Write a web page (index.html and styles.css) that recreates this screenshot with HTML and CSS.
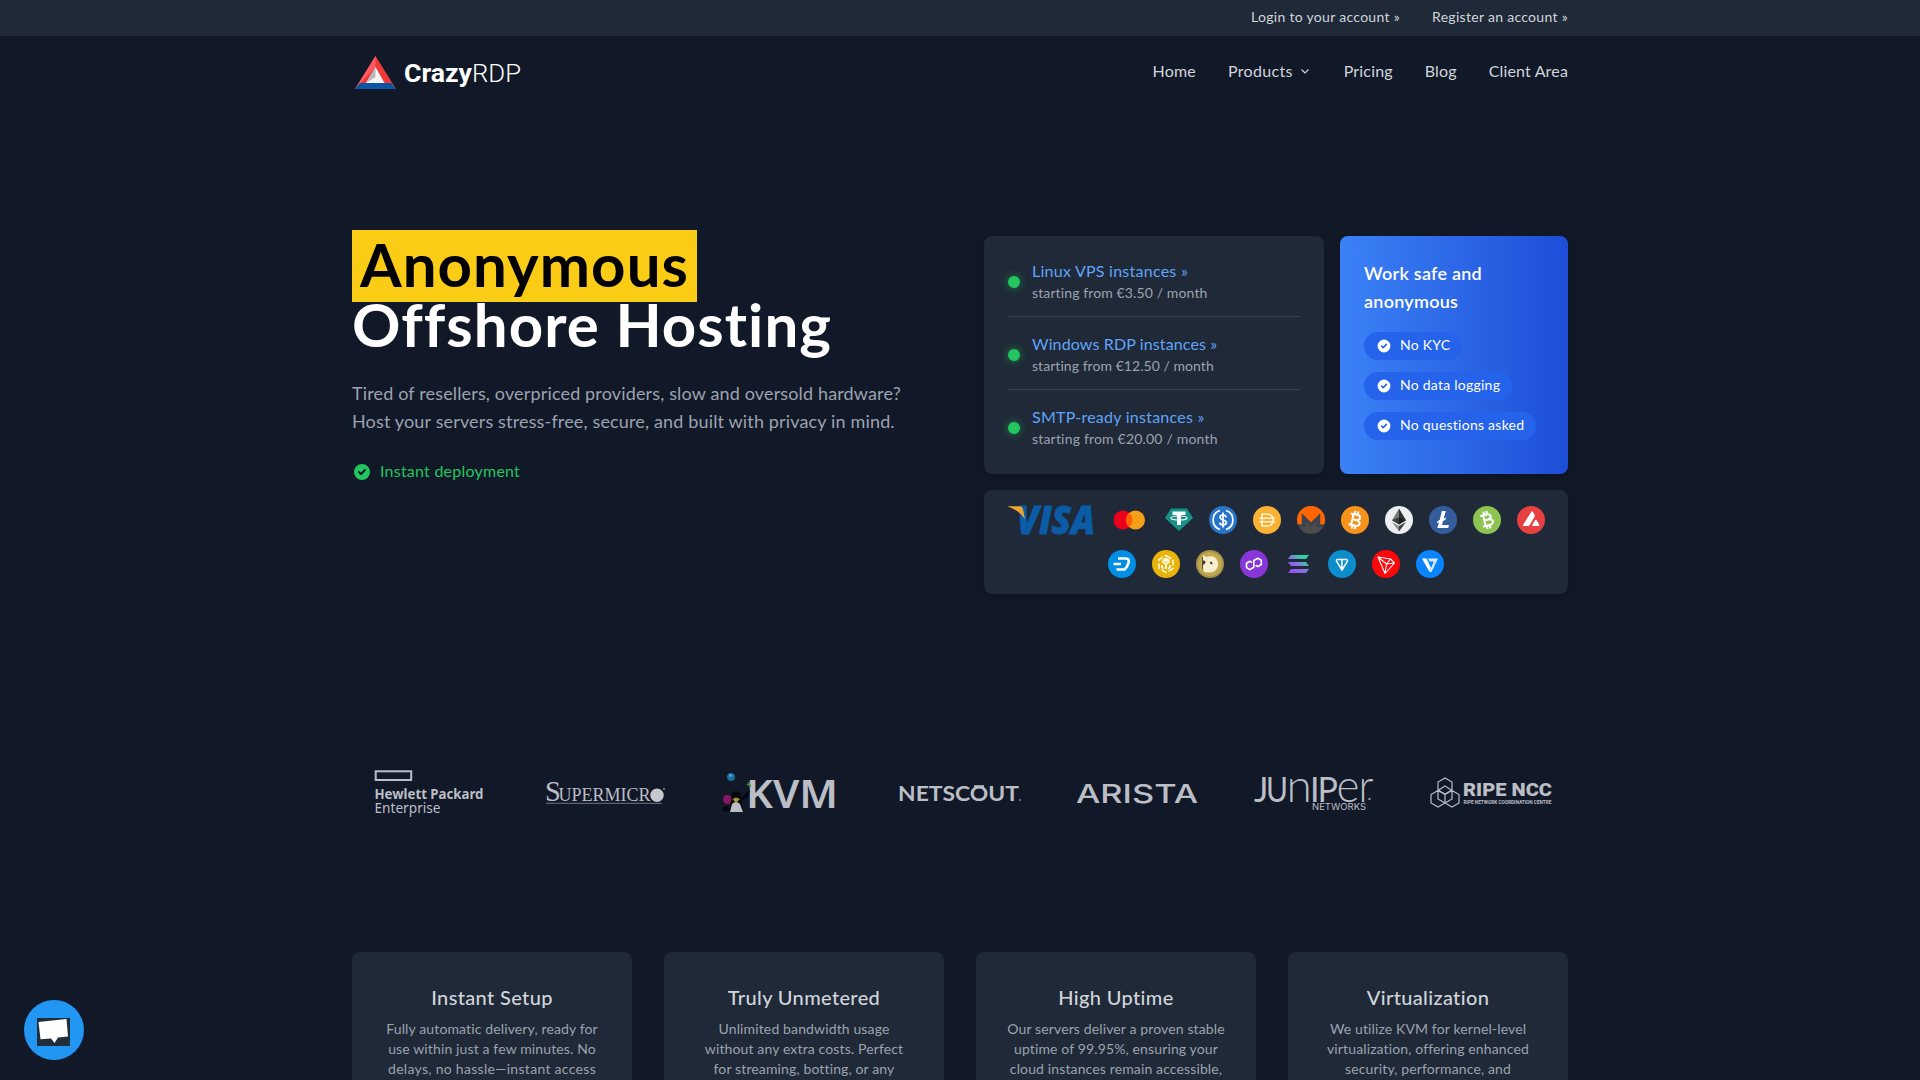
FILE: index.html
```html
<!DOCTYPE html>
<html lang="en">
<head>
<meta charset="utf-8">
<title>CrazyRDP</title>
<link rel="stylesheet" href="styles.css">
</head>
<body>
<div class="topbar"><div class="container topbar-in">
  <a>Login to your account »</a><a>Register an account »</a>
</div></div>
<header class="container header">
  <svg class="brand" viewBox="0 0 172 40" width="172" height="40">
    <path d="M23.500 4L44 37H3z" fill="#ef3a3a"/><path d="M23.500 4L3 37L23.500 15z" fill="#ff5a5f"/>
    <path d="M8 31H39L44 37H3z" fill="#0b55a4"/><path d="M23.500 15L32.500 31H14z" fill="#f4f4f6"/><path d="M23.500 15V25L14 31z" fill="#b9b9bd"/>
    <text y="30"><tspan class="b1" x="52" textLength="68" lengthAdjust="spacingAndGlyphs">Crazy</tspan><tspan class="b2" x="120" textLength="49" lengthAdjust="spacingAndGlyphs">RDP</tspan></text>
  </svg>
  <nav class="nav">
    <a>Home</a>
    <a class="has-menu">Products<svg width="12" height="12" viewBox="0 0 12 12"><path d="M2.500 4.500L6 8L9.500 4.500" fill="none" stroke="currentColor" stroke-width="1.200"/></svg></a>
    <a>Pricing</a><a>Blog</a><a>Client Area</a>
  </nav>
</header>
<main>
<section class="container hero">
  <div class="pitch">
    <h1><span class="hl">Anonymous</span><span class="h-line">Offshore Hosting</span></h1>
    <p class="lead">Tired of resellers, overpriced providers, slow and oversold hardware?<br>Host your servers stress-free, secure, and built with privacy in mind.</p>
    <div class="instant"><svg width="20" height="20" viewBox="0 0 20 20"><use href="#check"/></svg><span>Instant deployment</span></div>
  </div>
  <div class="panels">
    <div class="panel plans">
      <div class="plan"><i class="dot"></i><div><a>Linux VPS instances »</a><small>starting from €3.50 / month</small></div></div>
      <div class="plan windows"><i class="dot"></i><div><a>Windows RDP instances »</a><small>starting from €12.50 / month</small></div></div>
      <div class="plan smtp"><i class="dot"></i><div><a>SMTP-ready instances »</a><small>starting from €20.00 / month</small></div></div>
    </div>
    <div class="panel safe">
      <h2>Work safe and<br>anonymous</h2>
      <div class="pill"><svg width="16" height="16" viewBox="0 0 20 20"><use href="#check"/></svg><span>No KYC</span></div>
      <div class="pill"><svg width="16" height="16" viewBox="0 0 20 20"><use href="#check"/></svg><span>No data logging</span></div>
      <div class="pill"><svg width="16" height="16" viewBox="0 0 20 20"><use href="#check"/></svg><span>No questions asked</span></div>
    </div>
    <div class="panel pay">
      <svg class="visa" viewBox="0 0 86 28"><text x="10" y="27.500" textLength="78" lengthAdjust="spacingAndGlyphs">VISA</text><path d="M0 .3H13Q15.500 .3 16 3L18 13Q12 4 0 .3z" fill="#f0a62d"/></svg>
      <svg class="mc" viewBox="0 0 40 28"><circle cx="14" cy="14" r="9.500" fill="#eb001b"/><circle cx="26.500" cy="14" r="9.500" fill="#f79e1b"/><path d="M20.250 6.900a9.500 9.500 0 0 1 0 14.200a9.500 9.500 0 0 1 0-14.200" fill="#ff5f00"/></svg>
      <svg class="coin" viewBox="0 0 28 28"><path d="M6 2.500H22L28 12L14 25L0 12z" fill="#169187"/><path d="M7.500 5.500H20.500V9H16V19H12V9H7.500z" fill="#fff"/><ellipse cx="14" cy="12" rx="8" ry="2" fill="none" stroke="#fff" stroke-width="1.200"/></svg>
      <svg class="coin" viewBox="0 0 28 28"><circle cx="14" cy="14" r="14" fill="#2775ca"/><path d="M11 4.500A10 10 0 0 0 11 23.500M17 4.500A10 10 0 0 1 17 23.500M14 6.500V21.500" fill="none" stroke="#fff" stroke-width="1.700"/><path d="M17.200 11.300C16.800 8.300 11 8.300 11 11.300S17.400 13.700 17.400 16.600S11 19.900 10.700 16.700" fill="none" stroke="#fff" stroke-width="1.700"/></svg>
      <svg class="coin" viewBox="0 0 28 28"><circle cx="14" cy="14" r="14" fill="#f9b233"/><path d="M9 8H14Q20 8 20 14T14 20H9zM6.500 12.200H22M6.500 15.800H22" fill="none" stroke="#fff3d4" stroke-width="1.500"/></svg>
      <svg class="coin" viewBox="0 0 28 28"><circle cx="14" cy="14" r="14" fill="#4c4c4c"/><path d="M0 14A14 14 0 0 1 28 14Q28 16.500 27.200 18.500H23V7.500L14 16.500L5 7.500V18.500H.8Q0 16.500 0 14z" fill="#f60"/><path d="M4.800 7.500L14 16.500L23.200 7.500V18.500H28L25 21H19V16L14 21L9 16V21H3L0 18.500H4.800z" fill="#3b444d"/></svg>
      <svg class="coin" viewBox="0 0 28 28"><circle cx="14" cy="14" r="14" fill="#f7931a"/><use href="#btc" transform="rotate(12 14 14)"/></svg>
      <svg class="coin" viewBox="0 0 28 28"><circle cx="14" cy="14" r="14" fill="#ecf0f1"/><path d="M14 2.500L7 14.300L14 18.400z" fill="#777"/><path d="M14 2.500L21 14.300L14 18.400z" fill="#2f3030"/><path d="M7 14.300L14 11.200L21 14.300L14 18.400z" fill="#141414" opacity=".6"/><path d="M7 16L14 20V25.500z" fill="#8c8c8c"/><path d="M21 16L14 20V25.500z" fill="#3c3c3b"/></svg>
      <svg class="coin" viewBox="0 0 28 28"><circle cx="14" cy="14" r="14" fill="#345d9d"/><path d="M12.800 5H16.800L14.700 12.500L17 11.600L16.300 14L14 15L13 19H20L19.200 22H8.300L10 16.500L8 17.300L8.700 14.900L10.700 14z" fill="#fff"/></svg>
      <svg class="coin" viewBox="0 0 28 28"><circle cx="14" cy="14" r="14" fill="#8dc351"/><use href="#btc" transform="rotate(-14 14 14)"/></svg>
      <svg class="coin" viewBox="0 0 28 28"><circle cx="14" cy="14" r="14" fill="#e84142"/><path d="M14.500 5.500Q15.300 5 16 6L17.800 9.200Q18 10 17.600 10.800L12.500 19.300Q12 20 11 20H6.500Q5.500 19.500 6.200 18.500zM18 14.200Q18.800 13.200 19.600 14.200L22.300 18.700Q22.500 20 21.500 20H16Q14.800 19.500 15.500 18.500z" fill="#fff"/></svg>
      <svg class="coin" viewBox="0 0 28 28"><circle cx="14" cy="14" r="14" fill="#008de4"/><path d="M10 8.500H18Q21.500 8.500 20.600 12.500T16.500 19.500H8.500M5.500 14H13" fill="none" stroke="#fff" stroke-width="2.700"/></svg>
      <svg class="coin" viewBox="0 0 28 28"><circle cx="14" cy="14" r="14" fill="#e8b40c"/><path d="M14 5.500L21 9.500V18.500L14 22.500L7 18.500V9.500z" fill="none" stroke="#fff8dc" stroke-width="1.500" stroke-dasharray="6 2.100"/><path d="M10 11.500L14 14L18 11.500M14 14V19M10 15V17.500L12 18.500M18 15V17.500L16 18.500M11.500 10L14 8.500L16.500 10L14 11.300z" fill="none" stroke="#fff8dc" stroke-width="1.900"/></svg>
      <svg class="coin" viewBox="0 0 28 28"><circle cx="14" cy="14" r="14" fill="#a8924a"/><circle cx="14" cy="14" r="12" fill="#c0a94f"/><path d="M7 5L10 7Q16 5.500 19 7.500Q22.500 10 22 16Q20 22.500 14 22.500L8 22Q5.500 14 7 5z" fill="#f7edcf"/><path d="M6.500 10.500Q9.500 10 9.500 12.500Q8 15 6.500 15z" fill="#3a372c"/><path d="M14.500 12L16 14" stroke="#41371c" stroke-width="2"/><path d="M6.500 7V19" stroke="#5c5132"/></svg>
      <svg class="coin" viewBox="0 0 28 28"><circle cx="14" cy="14" r="14" fill="#8936d8"/><path d="M12.200 12.600L9.800 11.300L6.500 13.200V17.600L9.800 19.600L13.800 17.300V10.500L17.800 8.200L21.300 10.300V14.500L17.800 16.600L15.600 15.300" fill="none" stroke="#fff" stroke-width="1.600" stroke-linejoin="round"/></svg>
      <svg class="coin" viewBox="0 0 28 28"><defs><linearGradient id="sol" gradientUnits="userSpaceOnUse" x1="5" y1="24" x2="22" y2="4"><stop stop-color="#9945ff"/><stop offset=".5" stop-color="#8a73e0"/><stop offset=".8" stop-color="#2ed3a4"/></linearGradient></defs><path d="M7 5H25L22 9H4zM4 12H22L25 16H7zM7 19H25L22 23H4z" fill="url(#sol)"/></svg>
      <svg class="coin" viewBox="0 0 28 28"><circle cx="14" cy="14" r="14" fill="#0b8ecb"/><path d="M9.500 9.500H18.500Q20 10 19.300 11.500L14 20L8.700 11.500Q8 10 9.500 9.500zM14 9.500V19" fill="none" stroke="#fff" stroke-width="1.500"/></svg>
      <svg class="coin" viewBox="0 0 28 28"><circle cx="14" cy="14" r="14" fill="#ff060a"/><path d="M6 7L18.500 9L22.500 13L13 23.500zM6 7L14.500 14L13 23.500M14.500 14L22.500 13M14.500 14L18.500 9" fill="none" stroke="#fff" stroke-width="1.100" stroke-linejoin="round"/></svg>
      <svg class="coin" viewBox="0 0 28 28"><circle cx="14" cy="14" r="14" fill="#0a84ff"/><path d="M6 8.500H10.500L15 18L13.500 22z" fill="#fff"/><path d="M12 8.500H22L15.500 22H13.500L17.800 11.500H13.500z" fill="#d8ecff"/></svg>
    </div>
  </div>
</section>
<section class="container partners">
  <svg viewBox="0 0 120 48"><rect x="6.700" y="3.300" width="35.500" height="8.700" fill="none" stroke="#bcbec6" stroke-width="2"/><text class="noto" font-size="14.500"><tspan class="bold" x="5.500" y="31" textLength="109" lengthAdjust="spacingAndGlyphs">Hewlett Packard</tspan><tspan x="5.500" y="45" textLength="66" lengthAdjust="spacingAndGlyphs">Enterprise</tspan></text></svg>
  <svg viewBox="0 0 120 48"><text class="serif" y="33"><tspan x="-1" font-size="28.500">S</tspan><tspan x="12.500" font-size="18.500" textLength="92" lengthAdjust="spacingAndGlyphs">UPERMICR</tspan></text><circle cx="111" cy="27.300" r="6.700" fill="#c6c8ce"/><path d="M0 35.300H116" stroke="#70747f" stroke-width="1"/><circle cx="118" cy="21" r="1" fill="#8b8e98"/></svg>
  <svg viewBox="0 0 120 48"><text class="noto semi" x="23" y="40" font-size="40" textLength="92" lengthAdjust="spacingAndGlyphs">KVM</text><circle cx="8" cy="9" r="4" fill="#1b6d9c"/><circle cx="7.500" cy="7.500" r="1.200" fill="#70b3d2"/><circle cx="4.500" cy="31.500" r="4.500" fill="#8a1763"/><ellipse cx="3" cy="41" rx="3" ry="2.500" fill="#05070b"/><ellipse cx="13" cy="29" rx="5" ry="6" fill="#05070b"/><path d="M8 32L6 44H21L18 33L25 29L27 22L22 26L17 31z" fill="#05070b"/><path d="M9 36Q13 32 17 36L20 44H7z" fill="#bcbec6"/><path d="M9.500 31L13 29.500L17 31L13 35z" fill="#b49336"/><path d="M24 16L28 18M26 14L27 19" stroke="#4f8a37" stroke-width="1.500"/></svg>
  <svg viewBox="0 0 120 48"><text class="lato bold" x="-2" y="33" font-size="21.500" textLength="121" lengthAdjust="spacingAndGlyphs">NETSCOUT</text><circle cx="120" cy="32" r=".9" fill="#8b8e98"/><path d="M74 18.200H84" stroke="#bcbec6" stroke-width="2"/></svg>
  <svg viewBox="0 0 120 48"><text class="inter medium" x="-1" y="34.500" font-size="25.500" textLength="122" lengthAdjust="spacingAndGlyphs">ARISTA</text></svg>
  <svg viewBox="0 0 120 48"><text class="lato" y="33.500"><tspan x="0" font-size="34">J</tspan><tspan x="12" font-size="34" textLength="22" lengthAdjust="spacingAndGlyphs">U</tspan><tspan x="32.500" font-size="46" class="light">n</tspan><tspan x="56" font-size="34">I</tspan><tspan x="63.500" font-size="34">P</tspan><tspan x="82.500" font-size="46" class="light" textLength="23" lengthAdjust="spacingAndGlyphs">e</tspan><tspan x="104.500" font-size="46" class="light" textLength="15" lengthAdjust="spacingAndGlyphs">r</tspan></text><text class="inter" x="58" y="42" font-size="9" textLength="54" lengthAdjust="spacingAndGlyphs">NETWORKS</text><circle cx="115.500" cy="31" r="1.300" fill="#8b8e98"/></svg>
  <svg viewBox="0 0 120 48"><g fill="none" stroke="#bcbec6" stroke-width="1.200"><path d="M14 10L21 14V22L14 26L7 22V14zM7 22.500L14 26.500V35L7 39L0 35V26.500zM21 22.500L28 26.500V35L21 39L14 35V26.500zM14 18L21 22.500V31L14 35L7 31V22.500z"/></g><text class="roboto black" x="32" y="28" font-size="19" textLength="89" lengthAdjust="spacingAndGlyphs">RIPE NCC</text><text class="roboto bold" x="32.500" y="35.500" font-size="5.200" textLength="88" lengthAdjust="spacingAndGlyphs">RIPE NETWORK COORDINATION CENTRE</text></svg>
</section>
<section class="container features">
  <article><h3>Instant Setup</h3><p>Fully automatic delivery, ready for<br>use within just a few minutes. No<br><span class="dash-line">delays, no hassle—instant access</span></p></article>
  <article><h3>Truly Unmetered</h3><p>Unlimited bandwidth usage<br>without any extra costs. Perfect<br>for streaming, botting, or any</p></article>
  <article><h3>High Uptime</h3><p>Our servers deliver a proven stable<br>uptime of 99.95%, ensuring your<br>cloud instances remain accessible,</p></article>
  <article><h3>Virtualization</h3><p>We utilize KVM for kernel-level<br>virtualization, offering enhanced<br>security, performance, and</p></article>
</section>
</main>
<svg class="chat" viewBox="0 0 60 60"><circle cx="30" cy="30" r="30" fill="#2196f3"/><path d="M13 18H46V46H13z" fill="#1f2d3d"/><path d="M14.500 22L42.500 19L44 36.500L34 37.500L30.500 43L27 38.500L16.500 39.300z" fill="#fff"/></svg>
<svg class="defs"><defs>
  <path id="check" fill="currentColor" fill-rule="evenodd" d="M10 18a8 8 0 100-16 8 8 0 000 16zm3.707-9.293a1 1 0 00-1.414-1.414L9 10.586 7.707 9.293a1 1 0 00-1.414 1.414l2 2a1 1 0 001.414 0l4-4z"/>
  <path id="btc" d="M8.500 8.500H15Q18.500 8.500 18.500 11T15 13.700H11M15 13.700Q19.300 13.900 19.300 16.700T15 19.500H8.500M11.300 8.500V19.500M12.500 5V8.500M15.500 5V8.500M12.500 19.500V23M15.500 19.500V23" fill="none" stroke="#fff" stroke-width="2"/>
</defs></svg>
</body>
</html>
```
FILE: styles.css
```css
* { box-sizing: border-box; margin: 0; padding: 0; }
html { overflow: hidden; height: 100%; background: #111827; }
body { height: 1080px; overflow: hidden; background: #111827; color: #d1d5db; font: 16px/24px Lato, "Open Sans", sans-serif; }
svg { letter-spacing: 0; }
.container { width: 1216px; margin: 0 auto; }
.topbar { background: #1f2937; height: 36px; }
.topbar-in { display: flex; justify-content: flex-end; gap: 32px; font-size: 14px; line-height: 34px; letter-spacing: .3px; }
.header { height: 72px; display: flex; justify-content: space-between; align-items: center; }
.brand { display: block; }
.brand text { fill: #fff; font-family: Roboto, sans-serif; font-size: 26.500px; }
.brand .b1 { font-weight: 700; }
.brand .b2 { font-weight: 300; }
.nav { display: flex; gap: 32px; letter-spacing: .16px; margin-top: -2px; }
.has-menu { display: flex; align-items: center; gap: 6px; padding-right: 1px; letter-spacing: .33px; }
.hero { display: grid; grid-template-columns: 584px 584px; gap: 48px; padding-top: 128px; height: 486px; }
h1 { font-size: 60px; line-height: 60px; font-weight: 700; color: #fff; margin-top: -6px; letter-spacing: 1.050px; }
.hl { display: block; width: 345px; height: 72px; line-height: 69px; padding: 0 8px; background: #facc15; color: #000; white-space: nowrap; }
.h-line { display: block; height: 60px; line-height: 57px; margin-top: -6px; white-space: nowrap; }
.lead { font-size: 18px; line-height: 28px; color: #9ca3af; margin-top: 23px; white-space: nowrap; letter-spacing: .15px; }
.instant { display: flex; align-items: center; gap: 8px; margin-top: 26px; color: #22c55e; letter-spacing: .23px; }
.instant span, .pill span, .plan div { margin-top: -2px; }
.panels { display: grid; grid-template-columns: 340px 228px; grid-template-rows: 238px 104px; gap: 16px; }
.panel { border-radius: 8px; background: #1f2937; box-shadow: 0 4px 6px rgba(0,0,0,.15); }
.plans { padding: 24px; }
.plan { display: flex; align-items: center; gap: 12px; padding-bottom: 12px; border-bottom: 1px solid #374151; margin-bottom: 16px; height: 57px; }
.plan:last-child { border: 0; margin: 0; height: 56px; }
.plan a { display: block; color: #60a5fa; line-height: 24px; letter-spacing: .25px; }
.plan small { display: block; color: #9ca3af; font-size: 14px; line-height: 20px; letter-spacing: .12px; }
.windows a { letter-spacing: .13px; }
.windows small { letter-spacing: .05px; }
.smtp small { letter-spacing: .19px; }
.dot { width: 12px; height: 12px; border-radius: 50%; background: #22c55e; box-shadow: 0 0 8px rgba(34,197,94,.6); }
.safe { padding: 23px 24px 24px; background: linear-gradient(90deg, #3b82f6, #1d4ed8); color: #fff; }
.safe h2 { font-size: 18px; line-height: 28px; font-weight: 600; margin-bottom: 17px; letter-spacing: .25px; }
.pill { display: flex; width: max-content; align-items: center; gap: 8px; height: 28px; padding: 0 12px; border-radius: 14px; background: #2563eb; font-size: 14px; margin-bottom: 12px; letter-spacing: .25px; }
.pay { grid-column: 1 / 3; display: flex; flex-wrap: wrap; justify-content: center; gap: 16px; padding: 16px 20px; }
.pay svg { display: block; height: 28px; overflow: visible; }
.visa { width: 86px; }
.visa text { font: italic 800 38px "Open Sans", sans-serif; fill: #0b5ba6; stroke: #0b5ba6; stroke-width: .8px; }
.mc { width: 40px; }
.coin { width: 28px; }
.partners { display: grid; grid-template-columns: repeat(7, 1fr); gap: 24px; justify-items: center; padding-top: 174px; }
.partners svg { width: 120px; height: 48px; overflow: visible; fill: #bcbec6; }
.noto { font-family: "Noto Sans", sans-serif; }
.roboto { font-family: Roboto, sans-serif; }
.lato { font-family: Lato, sans-serif; }
.inter { font-family: Inter, sans-serif; }
.serif { font-family: "Liberation Serif", serif; }
.light { font-weight: 300; }
.medium { font-weight: 500; }
.semi { font-weight: 600; }
.bold { font-weight: 700; }
.black { font-weight: 900; }
.features { display: grid; grid-template-columns: repeat(4, 280px); gap: 32px; padding-top: 136px; }
.features article { background: #1f2937; border-radius: 8px 8px 0 0; height: 128px; padding: 31px 24px 0; text-align: center; }
.features h3 { font-size: 20px; line-height: 28px; font-weight: 500; margin-bottom: 8px; color: #d1d5db; white-space: nowrap; letter-spacing: .35px; }
.features p { font-size: 14px; line-height: 20px; color: #9ca3af; white-space: nowrap; letter-spacing: .13px; }
.features .dash-line { letter-spacing: .3px; }
.chat { position: fixed; left: 24px; top: 1000px; width: 60px; height: 60px; }
.defs { position: absolute; width: 0; height: 0; }
```
